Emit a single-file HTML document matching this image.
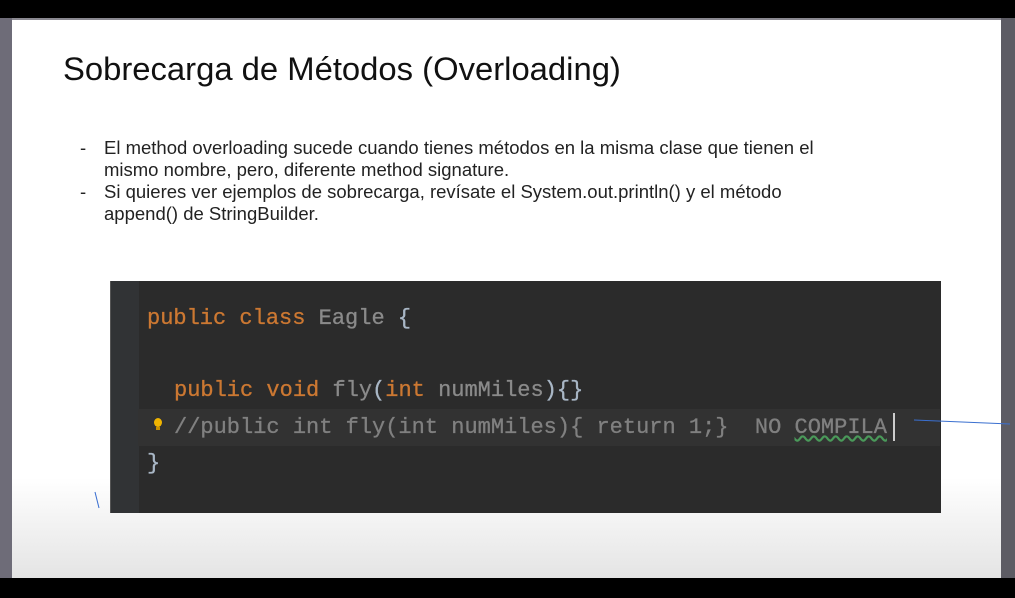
<!DOCTYPE html>
<html><head><meta charset="utf-8"><style>
*{margin:0;padding:0}
body{width:1015px;height:598px;background:#000;position:relative;overflow:hidden;font-family:"Liberation Sans",Arial,sans-serif}
.lg{position:absolute;left:0;top:18px;width:12px;height:560px;background:#6e6c78}
.rg{position:absolute;left:1001px;top:18px;width:14px;height:560px;background:#5d5c64}
.tg{position:absolute;left:0;top:18px;width:1015px;height:2px;background:#8a8890}
.slide{position:absolute;left:12px;top:20px;width:989px;height:558px;background:linear-gradient(#fff 0,#fff 82%,#e4e4e4 100%)}
h1{position:absolute;left:63px;top:50px;font-weight:normal;font-size:32.8px;color:#111;white-space:nowrap}
.b{position:absolute;font-size:18.5px;color:#222;line-height:22px;white-space:nowrap}
.code{position:absolute;left:110px;top:281px;width:830px;height:232px;background:#2b2b2b;border-left:1px solid #555}
.gut{position:absolute;left:0;top:0;width:28px;height:232px;background:#313335}
.hl{position:absolute;left:28px;top:409px;width:802px;height:37px;background:#323232}
.ln{position:absolute;font-family:"Liberation Mono",monospace;font-size:22px;white-space:pre;color:#a9b7c6;-webkit-text-stroke:0.3px currentColor}
.k{color:#cc7832}.g{color:#8a8a8a}.c{color:#808080}
</style></head><body>
<div class="tg"></div><div class="lg"></div><div class="rg"></div>
<div class="slide"></div>
<h1>Sobrecarga de Métodos (Overloading)</h1>
<div class="b" style="left:80px;top:137px">-</div>
<div class="b" style="left:104px;top:137px">El method overloading sucede cuando tienes métodos en la misma clase que tienen el<br>mismo nombre, pero, diferente method signature.</div>
<div class="b" style="left:80px;top:181px">-</div>
<div class="b" style="left:104px;top:181px">Si quieres ver ejemplos de sobrecarga, revísate el System.out.println() y el método<br>append() de StringBuilder.</div>
<div class="code"><div class="gut"></div></div>
<div class="hl" style="left:138px"></div>
<div class="ln" style="left:147px;top:306px"><span class="k">public class </span><span class="g">Eagle </span>{</div>
<div class="ln" style="left:174px;top:378px"><span class="k">public void </span><span class="g">fly</span>(<span class="k">int </span><span class="g">numMiles</span>){}</div>
<div class="ln c" style="left:174px;top:415px">//public int fly(int numMiles){ return 1;}  NO <span style="text-decoration:underline wavy #4a9a5a">COMPILA</span></div>
<div style="position:absolute;left:893px;top:413px;width:2px;height:28px;background:#ccc"></div>
<div style="position:absolute;left:154px;top:418px;width:8px;height:9px;border-radius:50%;background:#f0b400"></div>
<div style="position:absolute;left:156px;top:427px;width:4px;height:3px;background:#c89000"></div>
<div class="ln" style="left:147px;top:451px">}</div>
<svg style="position:absolute;left:0;top:0" width="1015" height="598"><path d="M914 420 Q960 422 1010 424" stroke="#3a6fd0" stroke-width="1" fill="none"/><path d="M95 492 L99 508" stroke="#3a6fd0" stroke-width="1"/></svg>
</body></html>
